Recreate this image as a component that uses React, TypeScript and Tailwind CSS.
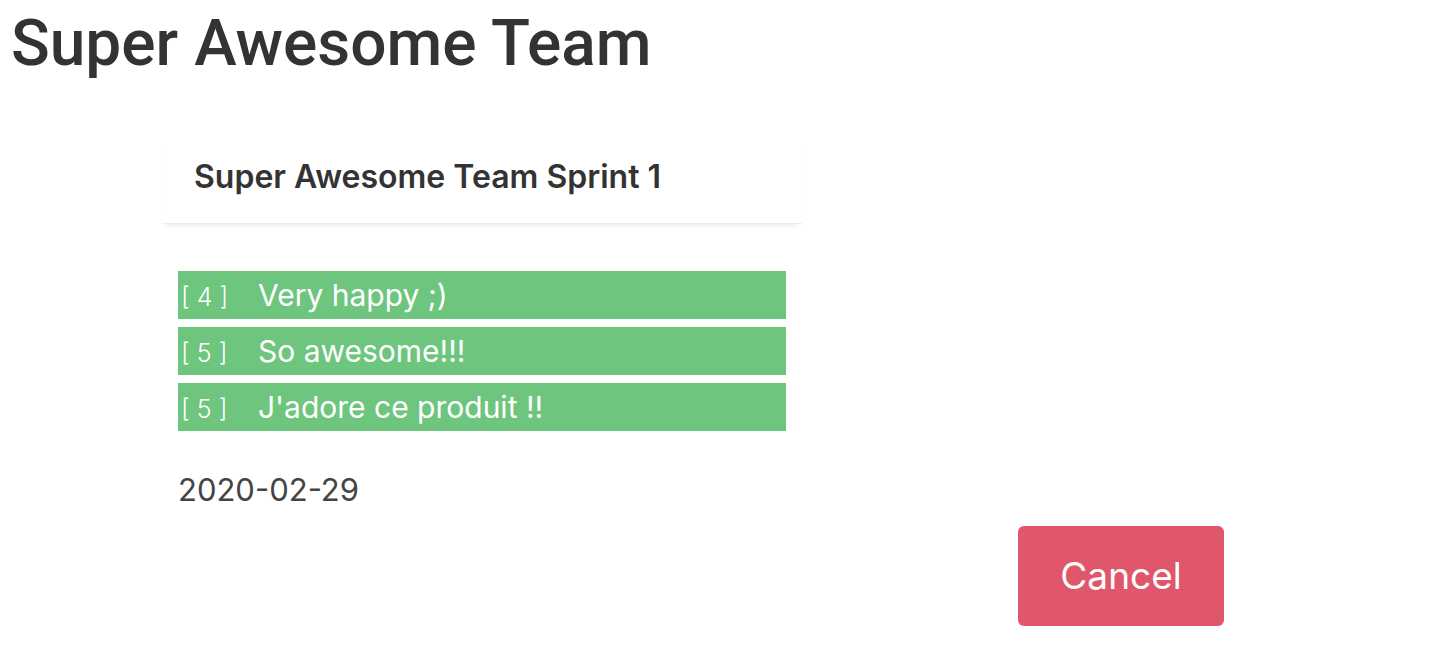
import React from "react";

const feedback = [
  { score: 4, text: "Very happy ;)" },
  { score: 5, text: "So awesome!!!" },
  { score: 5, text: "J'adore ce produit !!" },
];

const FeedbackRow = ({ score, text }: { score: number; text: string }) => (
  <div className="flex h-[48px] items-baseline bg-[#6ec57e] text-white">
    <span className="w-[80px] pl-[3px] font-['Inter',sans-serif] text-[25px] font-light">[ {score} ]</span>
    <span className="font-['Inter',sans-serif] text-[30px] font-normal leading-[48px]">{text}</span>
  </div>
);

export default function App() {
  return (
    <div className="min-h-[648px] bg-white text-[#333]">
      <h1 className="pl-[11px] pt-[12px] font-['Roboto',Arial,sans-serif] text-[64px] font-medium leading-none">
        Super Awesome Team
      </h1>

      <div className="ml-[162px] mt-[55px] w-[640px]">
        <div className="flex h-[93px] items-center border-b border-[#ededed] pl-[32px] shadow-[0_6px_6px_-5px_rgba(0,0,0,0.1)]">
          <h2 className="font-['Inter',sans-serif] text-[32px] font-semibold">
            Super Awesome Team Sprint 1
          </h2>
        </div>

        <div className="px-[16px] pt-[47px]">
          <div className="flex flex-col gap-[8px]">
            {feedback.map((f, i) => (
              <FeedbackRow key={i} score={f.score} text={f.text} />
            ))}
          </div>
          <p className="mt-[36px] font-['Inter',sans-serif] text-[31px] text-[#444]">2020-02-29</p>
        </div>
      </div>

      <div className="flex pl-[1018px] pt-[12px]">
        <button className="flex h-[100px] w-[206px] items-center justify-center rounded-[6px] bg-[#e0566b] font-['Inter',sans-serif] text-[37px] text-white">
          Cancel
        </button>
      </div>
    </div>
  );
}
